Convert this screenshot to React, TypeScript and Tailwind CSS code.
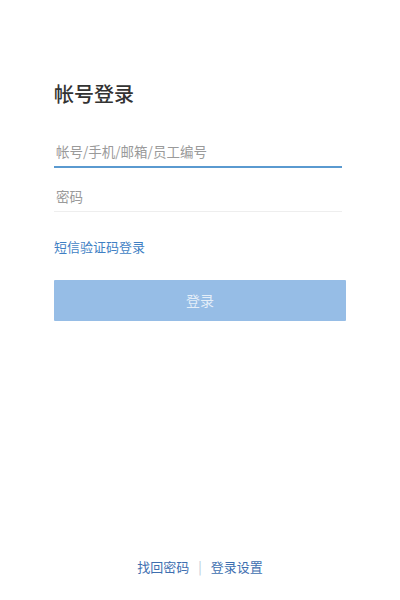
export default function App() {
  return (
    <div
      className="w-[400px] h-[600px] bg-white flex flex-col"
      style={{ fontFamily: '"Noto Sans CJK SC", "Noto Sans", sans-serif' }}
    >
      <div className="px-[54px] pt-[80px] flex-1">
        <h1 className="text-[20px] leading-[28px] font-medium text-[#333]">帐号登录</h1>

        <div className="mt-[28px] w-[288px]">
          <input
            placeholder="帐号/手机/邮箱/员工编号"
            className="w-full h-[32px] text-[13.5px] text-[#333] placeholder:text-[#9a9a9a] outline-none border-b-2 border-[#5a9ad0] pl-[2px]"
          />
        </div>
        <div className="mt-[12px] w-[288px]">
          <input
            placeholder="密码"
            type="password"
            className="w-full h-[32px] text-[13.5px] text-[#333] placeholder:text-[#9a9a9a] outline-none border-b border-[#eeeeee] pl-[2px]"
          />
        </div>

        <div className="mt-[26px] text-[13px] leading-[18px] text-[#3f7fc4]">短信验证码登录</div>

        <button className="mt-[24px] w-[292px] h-[41px] bg-[#96bde6] text-white/75 text-[14px] rounded-[1px]">
          登录
        </button>
      </div>

      <div className="pb-[24px] flex justify-center items-center gap-[9px] text-[13px] text-[#3e6fb0]">
        <span>找回密码</span>
        <span className="text-[#b8c6d8]">|</span>
        <span>登录设置</span>
      </div>
    </div>
  );
}
